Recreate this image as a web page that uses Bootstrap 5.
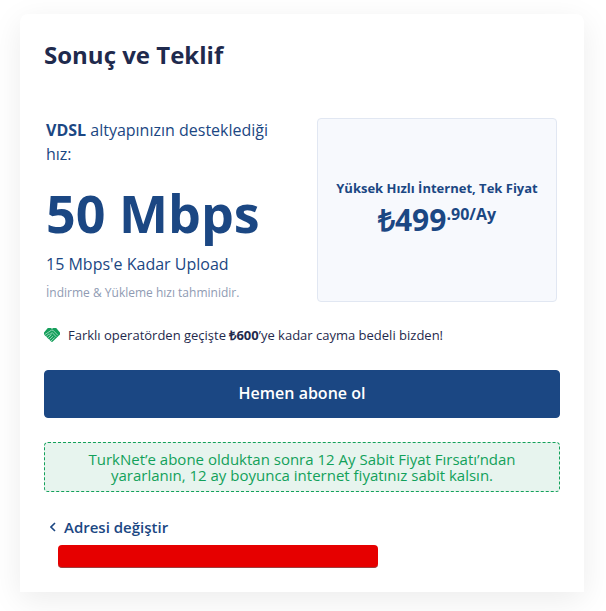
<!DOCTYPE html>
<html lang="tr">
<head>
<meta charset="utf-8">
<meta name="viewport" content="width=device-width, initial-scale=1">
<title>Sonuç ve Teklif</title>
<link href="https://cdn.jsdelivr.net/npm/bootstrap@5.3.0/dist/css/bootstrap.min.css" rel="stylesheet">
<style>
  body { font-family: "Open Sans", sans-serif; color: #1f2a4d; background: #fff; }
  .offer-wrap { padding: 14px 22px 19px 20px; }
  .offer { background: #fff; border-radius: 8px 8px 0 0; box-shadow: 0 8px 32px rgba(0, 0, 0, .08); padding: 24px; }
  .offer-title { font-size: 24px; line-height: 34px; margin-bottom: 46px; }
  .navy { color: #1b4783; }
  .plan { display: grid; grid-template-columns: 1fr 1fr; gap: 31px; padding: 0 3px 0 2px; }
  .plan-text { font-size: 16px; line-height: 24px; }
  .speed { font-size: 52px; line-height: 64px; margin: 15px 0 7px; }
  .estimate { font-size: 12px; line-height: 18px; color: #8f9bb3; margin-top: 8px; }
  .price-box { background: #f7f9fd; border: 1px solid #e1e7f2; border-radius: 4px; font-weight: 700; padding-bottom: 2px; }
  .price-name { font-size: 13px; line-height: 20px; margin-bottom: 2px; }
  .price { font-size: 30px; line-height: 40px; }
  .price-cents { font-size: 16px; line-height: 24px; padding-top: 2px; }
  .switch-note { font-size: 13px; line-height: 18px; margin: 24px 0 26px; }
  .subscribe { --bs-btn-bg: #1b4783; --bs-btn-border-color: #1b4783; --bs-btn-color: #fff; --bs-btn-hover-bg: #163a6c; --bs-btn-hover-color: #fff; --bs-btn-border-radius: 4px; height: 48px; font-size: 16px; font-weight: 600; padding: 4px 12px 6px; }
  .promo { color: #12a15a; background: #e7f4ee; border: 1px dashed #12a15a; border-radius: 4px; font-size: 15px; line-height: 16px; padding: 8px 32px; margin-top: 24px; }
  .address-link { font-size: 15px; line-height: 22px; font-weight: 600; margin: 24px 0 0 6px; }
  .address-bar { width: 62%; height: 23px; background: #e60000; border-radius: 4px; border-bottom: 1px solid #9c4040; margin: 7px 0 0 14px; }
</style>
<script defer src="https://cdn.jsdelivr.net/npm/bootstrap@5.3.0/dist/js/bootstrap.bundle.min.js"></script>
</head>
<body>
<main class="offer-wrap">
  <section class="offer">
    <h1 class="offer-title fw-bold">Sonuç ve Teklif</h1>
    <div class="plan navy">
      <div class="plan-text">
        <p class="m-0"><strong>VDSL</strong> altyapınızın desteklediği hız:</p>
        <p class="speed fw-bold text-nowrap">50 Mbps</p>
        <p class="m-0">15 Mbps'e Kadar Upload</p>
        <p class="estimate mb-0">İndirme &amp; Yükleme hızı tahminidir.</p>
      </div>
      <div class="price-box d-flex flex-column align-items-center justify-content-center text-nowrap">
        <div class="price-name">Yüksek Hızlı İnternet, Tek Fiyat</div>
        <div class="d-flex align-items-start">
          <span class="price">₺499</span><span class="price-cents">.90/Ay</span>
        </div>
      </div>
    </div>
    <div class="switch-note d-flex align-items-center gap-2">
      <svg width="16" height="16" viewBox="0 0 16 16" aria-hidden="true">
        <path d="M3.8 1H6.6L8 1.7 9.4 1H12.2L16 5.6V7.4L8.8 14.6Q8 15.3 7.2 14.6L0 7.4V5.6Z" fill="#159e5b"/>
        <path d="M.8 7.6 7.4 3.2 9 3.2 13.6 8M5.6 7.6 8.3 5.6 12 9.6M2.4 9.2 5 6.8M4 10.8 7.2 8M5.6 12.4 8.8 9.4M7.2 13.8 10.4 10.8" fill="none" stroke="#b4e3ca" stroke-width=".8" stroke-linecap="round" stroke-linejoin="round"/>
      </svg>
      <span>Farklı operatörden geçişte <strong>₺600</strong>’ye kadar cayma bedeli bizden!</span>
    </div>
    <button type="button" class="btn subscribe w-100">Hemen abone ol</button>
    <div class="promo text-center">TurkNet’e abone olduktan sonra 12 Ay Sabit Fiyat Fırsatı’ndan yararlanın, 12 ay boyunca internet fiyatınız sabit kalsın.</div>
    <a href="#" class="address-link navy text-decoration-none d-flex align-items-center gap-2">
      <svg width="6" height="10" viewBox="0 0 6 10" aria-hidden="true"><path d="M5 1 1 5 5 9" fill="none" stroke="currentColor" stroke-width="1.6"/></svg>
      <span>Adresi değiştir</span>
    </a>
    <div class="address-bar"></div>
  </section>
</main>
</body>
</html>
